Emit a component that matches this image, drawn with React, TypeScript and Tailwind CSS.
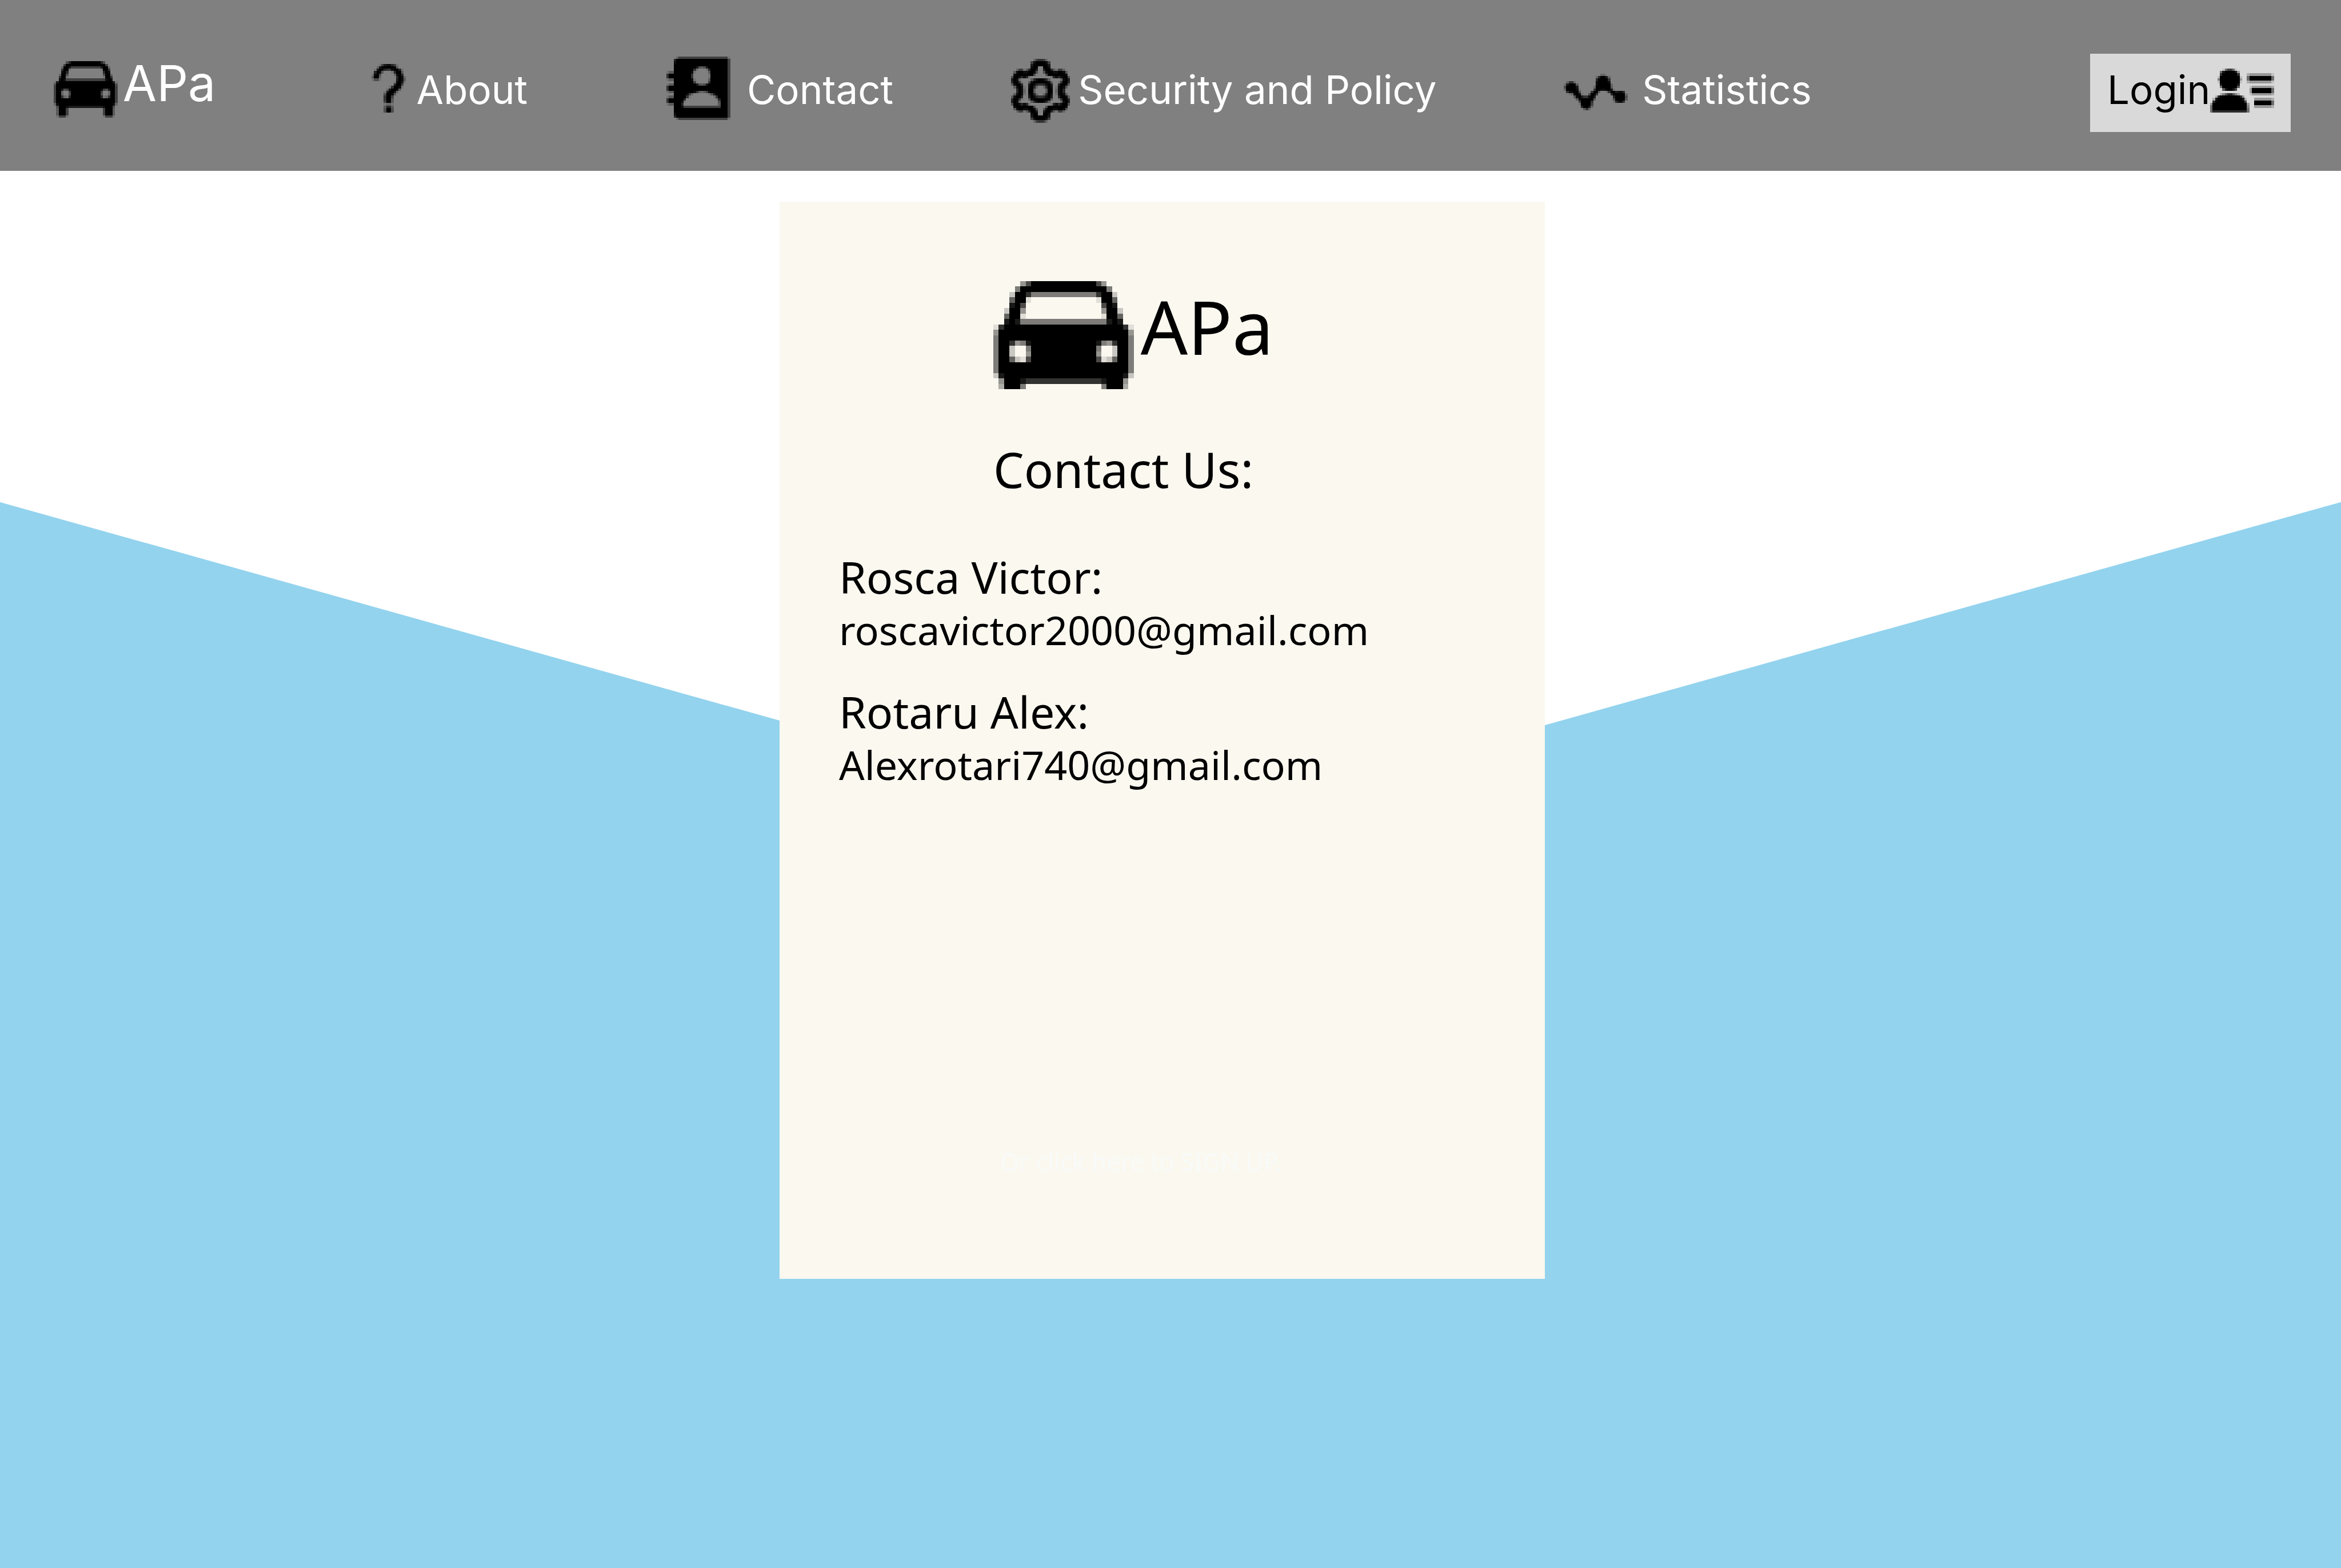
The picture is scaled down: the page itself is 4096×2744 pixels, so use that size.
import React from "react";

type Art = string[];

const mirrorX = (rows: Art): Art => rows.map((r) => r + r.split("").reverse().join(""));
const mirrorY = (rows: Art): Art => [...rows, ...[...rows].reverse()];

/* Bitmap icons: "#" is solid, "1"–"9" are tenths of opacity, "." is empty. */
const CAR = mirrorX([
  ".....47######",
  "....5########",
  "...2##8555555",
  "...6##1......",
  "...9#7.......",
  "..2##4.......",
  "..6##1.......",
  "..9#955555555",
  "18###########",
  "4############",
  "5############",
  "5##8459######",
  "5##2..5######",
  "5##2..4######",
  "5##6217######",
  "5############",
  "5############",
  "29###########",
  ".4###98888888",
  ".3###5.......",
  ".3###5.......",
  ".3###5.......",
  ".15551.......",
]);

const QUESTION: Art = [
  "...15899751...",
  "..28#####93...",
  ".18#97669##71.",
  ".7#93...17##3.",
  "19#4.....29#7.",
  "3##2......7#92",
  "1441......8#93",
  ".........19#81",
  ".........7##5.",
  ".......16##91.",
  "......28##93..",
  ".....18##82...",
  ".....4##93....",
  ".....6##5.....",
  ".....6##3.....",
  ".....5##3.....",
  ".....1221.....",
  ".....3773.....",
  ".....4##4.....",
  ".....4##4.....",
];

const BOOK: Art = [
  "....2555555555555555555551",
  "...7#####################5",
  "...9#####################5",
  "...######################5",
  "...#########84348########5",
  "...########61...17#######5",
  "133#######91.....3#######5",
  "6#########6......1#######5",
  "6#########6......1#######5",
  "133#######91.....3#######5",
  "...########5.....6#######5",
  "133#########84348########5",
  "6########################5",
  "6########################5",
  "133########9632359#######5",
  "...#####952......148#####5",
  "133#####61.........16####5",
  "6######7............17###5",
  "6#####91.............4###5",
  "133###7..............3###5",
  "...###9555555555555555###5",
  "...######################5",
  "...######################5",
  "...9#####################5",
  "...7#####################5",
  "....2555555555555555555551",
];

const GEAR = mirrorY(
  mirrorX([
    ".........256",
    "........59##",
    "........8###",
    "........9##.",
    "..255137##8.",
    ".39##99##94.",
    ".9#######4..",
    "4##97971....",
    "8#92....379#",
    "7##61..39###",
    "39##7..8#976",
    ".39#91.9#72.",
    "..7#92.##3..",
  ])
);

const TREND: Art = [
  "...............22.........",
  ".............27##82.......",
  ".............7####6.......",
  ".2662........9####9.......",
  "18###3.......9#####2......",
  "4####8......2######3......",
  "2####91.....6##99##81.....",
  ".699##4....6##3..16##8997.",
  "..129#91..4##6.....7#####2",
  "....39#8669#8.......7####4",
  ".....39#####3.......4####3",
  "......5####6........17996.",
  "......1####5..............",
  ".......7##82..............",
  "........362...............",
];

const USER: Art = [
  ".....157751...............",
  "....59####93..............",
  "....8######8...23333333331",
  "...1########1..5#########5",
  "...4########3..5#########5",
  "...1########1..23333333331",
  "....9######9..............",
  "....5######6....1333333332",
  ".....69##97.....3########5",
  "................3########5",
  "....24688642....1333333332",
  "..28########83............",
  ".29##########92...33333332",
  ".8############7...#######5",
  "3##############3..#######5",
  "5##############4..33333332",
  "5##############5..........",
  "5888888888888885..........",
];

type IconProps = { art: Art; top?: number; rows?: number; className: string };

function BitmapIcon({ art, top = 0, rows = 30, className }: IconProps) {
  const runs: React.ReactElement[] = [];
  art.forEach((row, y) => {
    let x = 0;
    while (x < row.length) {
      const ch = row[x];
      let end = x + 1;
      while (end < row.length && row[end] === ch) end++;
      if (ch !== ".") {
        runs.push(
          <rect
            key={`${x}-${y}`}
            x={x}
            y={y + top}
            width={end - x}
            height={1}
            fillOpacity={ch === "#" ? 1 : Number(ch) / 10}
          />
        );
      }
      x = end;
    }
  });
  return (
    <svg
      aria-hidden="true"
      viewBox={`0 0 ${art[0].length} ${rows}`}
      shapeRendering="crispEdges"
      className={className}
    >
      {runs}
    </svg>
  );
}

type NavItem = { label: string; art: Art; top: number; className: string };

const NAV: NavItem[] = [
  { label: "About", art: QUESTION, top: 5, className: "ml-[273px] gap-[18px]" },
  { label: "Contact", art: BOOK, top: 2, className: "ml-[243px] gap-[29px]" },
  { label: "Security and Policy", art: GEAR, top: 3, className: "ml-[206px] gap-[14px]" },
  { label: "Statistics", art: TREND, top: 9, className: "ml-[223px] gap-[25px]" },
];

const PEOPLE = [
  { name: "Rosca Victor:", email: "roscavictor2000@gmail.com" },
  { name: "Rotaru Alex:", email: "Alexrotari740@gmail.com" },
];

function Header() {
  return (
    <header className="flex items-start whitespace-nowrap bg-[#808080] pt-[90px] pr-[88px] pb-[68px] pl-[94px] font-['Inter',sans-serif] text-[69px] text-white">
      <a href="#home" className="flex items-start gap-[9px] text-[86px] leading-[112px]">
        <BitmapIcon art={CAR} top={4} className="h-[129px] w-auto" />
        APa
      </a>
      <nav className="flex items-start leading-[135px]">
        {NAV.map((item) => (
          <a key={item.label} href={`#${item.label}`} className={`flex items-start ${item.className}`}>
            <BitmapIcon art={item.art} top={item.top} className="h-[129px] w-auto" />
            {item.label}
          </a>
        ))}
      </nav>
      <button
        type="button"
        className="mt-1 ml-auto flex h-[137px] items-start bg-[#d9d9d9] pr-[29px] pl-[30px] leading-[127px] text-black"
      >
        Login
        <BitmapIcon art={USER} top={6} className="h-[129px] w-auto" />
      </button>
    </header>
  );
}

function ContactCard() {
  return (
    <section className="mt-[54px] ml-[33.3%] w-[32.7%] whitespace-nowrap bg-[#fbf8f0] pt-[139px] pb-[181px] pl-[104px] font-['Noto_Sans',sans-serif] text-black">
      <div className="ml-[270px] flex items-start gap-[12px]">
        <BitmapIcon art={CAR.slice(0, 20)} rows={20} className="h-[189px] w-auto" />
        <p className="text-[129px] leading-[159px]">APa</p>
      </div>
      <h1 className="mt-[93px] ml-[270px] text-[85px] leading-[94px]">Contact Us:</h1>
      <ul className="mt-[100px] flex flex-col gap-[60px]">
        {PEOPLE.map((p) => (
          <li key={p.email} className="flex flex-col items-start gap-2">
            <h2 className="text-[77px] leading-[84px]">{p.name}</h2>
            <a href={`mailto:${p.email}`} className="text-[70px] leading-[84px]">
              {p.email}
            </a>
          </li>
        ))}
      </ul>
      <a href="#signup" className="mt-[629px] ml-[282px] block text-[43px] leading-[48px] text-[#f8fbf8]">
        Or click here to SIGN UP.
      </a>
    </section>
  );
}

export default function App() {
  return (
    <div className="relative isolate min-h-screen bg-white">
      <div className="absolute inset-0 -z-10 bg-[#93d3ee] [clip-path:polygon(0_32.02%,50%_52.94%,100%_32.02%,100%_100%,0_100%)]" />
      <Header />
      <main>
        <ContactCard />
      </main>
    </div>
  );
}
